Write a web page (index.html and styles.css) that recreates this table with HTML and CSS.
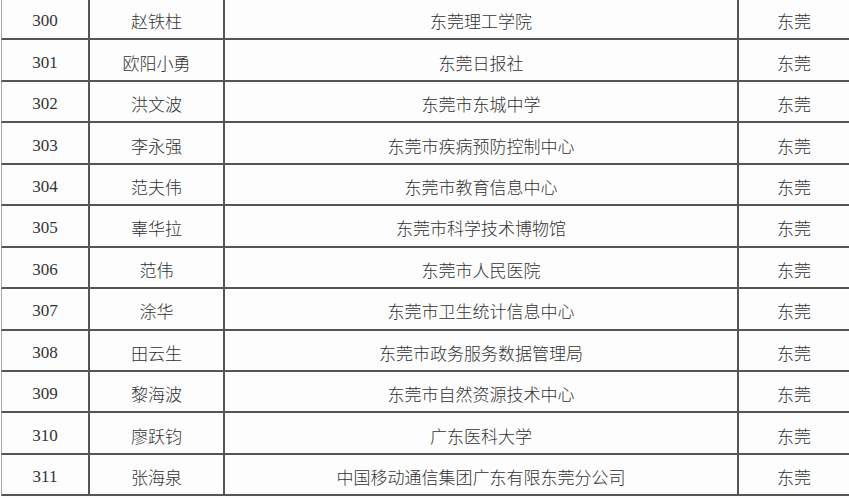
FILE: index.html
```html
<!DOCTYPE html>
<html lang="zh-CN">
<head>
<meta charset="utf-8">
<title>名单</title>
<link rel="stylesheet" href="styles.css">
</head>
<body>
<table class="roster">
  <colgroup>
    <col class="c-no">
    <col class="c-name">
    <col class="c-org">
    <col class="c-city">
  </colgroup>
  <tbody>
    <tr><td class="no">300</td><td>赵铁柱</td><td>东莞理工学院</td><td class="city">东莞</td></tr>
    <tr><td class="no">301</td><td>欧阳小勇</td><td>东莞日报社</td><td class="city">东莞</td></tr>
    <tr><td class="no">302</td><td>洪文波</td><td>东莞市东城中学</td><td class="city">东莞</td></tr>
    <tr><td class="no">303</td><td>李永强</td><td>东莞市疾病预防控制中心</td><td class="city">东莞</td></tr>
    <tr><td class="no">304</td><td>范夫伟</td><td>东莞市教育信息中心</td><td class="city">东莞</td></tr>
    <tr><td class="no">305</td><td>辜华拉</td><td>东莞市科学技术博物馆</td><td class="city">东莞</td></tr>
    <tr><td class="no">306</td><td>范伟</td><td>东莞市人民医院</td><td class="city">东莞</td></tr>
    <tr><td class="no">307</td><td>涂华</td><td>东莞市卫生统计信息中心</td><td class="city">东莞</td></tr>
    <tr><td class="no">308</td><td>田云生</td><td>东莞市政务服务数据管理局</td><td class="city">东莞</td></tr>
    <tr><td class="no">309</td><td>黎海波</td><td>东莞市自然资源技术中心</td><td class="city">东莞</td></tr>
    <tr><td class="no">310</td><td>廖跃钧</td><td>广东医科大学</td><td class="city">东莞</td></tr>
    <tr><td class="no">311</td><td>张海泉</td><td>中国移动通信集团广东有限东莞分公司</td><td class="city">东莞</td></tr>
  </tbody>
</table>
</body>
</html>
```

FILE: styles.css
```css
html, body {
  margin: 0;
  padding: 0;
  background: #fdfdfd;
  overflow: hidden;
}

.roster {
  margin: -1px 0 0 1px;
  width: 848px;
  table-layout: fixed;
  border-collapse: separate;
  border-spacing: 0;
  color: #333;
  font-family: "Noto Sans CJK SC", "Liberation Serif", sans-serif;
  font-size: 17px;
  font-weight: 300;
}

.c-no { width: 89px; }
.c-name { width: 135px; }
.c-org { width: 514px; }
.c-city { width: 110px; }

.roster tr {
  height: 41.45px;
}

.roster td {
  padding: 5px 0 0 0;
  text-align: center;
  vertical-align: middle;
  border-right: 2px solid #555;
  border-bottom: 2px solid #555;
  line-height: 20px;
  white-space: nowrap;
}

.roster td.no {
  border-left: 1px solid #aaa;
  font-family: "Liberation Serif", serif;
  font-size: 17px;
  font-weight: 400;
}

.roster td.city {
  border-right: none;
}
```
